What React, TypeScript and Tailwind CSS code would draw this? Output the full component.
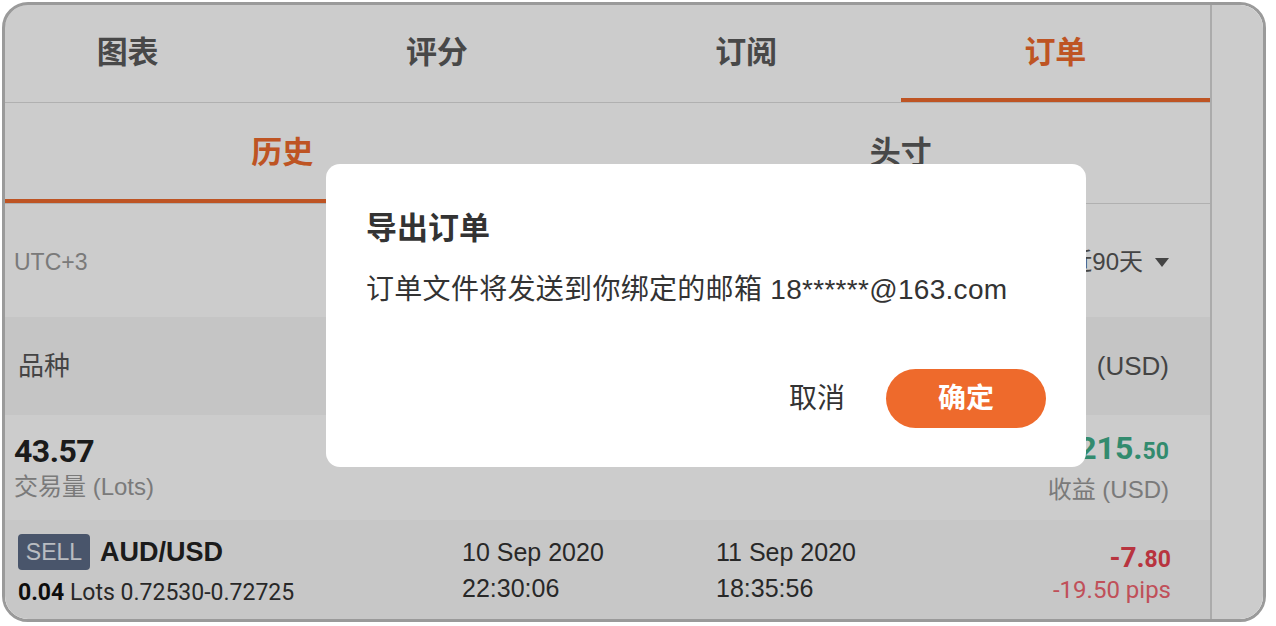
import React from "react";

const cjk = '"Liberation Sans", "Noto Sans CJK SC", sans-serif';
const num = 'Roboto, "Noto Sans CJK SC", sans-serif';

const tabs = ["图表", "评分", "订阅", "订单"];

export default function App() {
  return (
    <div className="w-[1276px] h-[626px] bg-white pl-[2px] pt-[2px]" style={{ fontFamily: cjk }}>
      <div className="relative w-[1264px] h-[620px] rounded-[26px] border-[3px] border-[#9a9a9a] overflow-hidden bg-white flex">
        {/* page */}
        <div className="w-[1205px] h-full overflow-hidden flex flex-col">
          {/* top tabs */}
          <div className="h-[98px] shrink-0 border-b border-[#dcdcdc]">
            <div className="ml-[-32px] w-[1237px] h-full grid grid-cols-4">
              {tabs.map((t, i) => (
                <div
                  key={t}
                  className={
                    "flex items-center justify-center pt-[4px] text-[31px] font-bold border-b-[4px] " +
                    (i === 3 ? "text-[#ee6a2c] border-[#ee6a2c]" : "text-[#5a5a5a] border-transparent")
                  }
                >
                  {t}
                </div>
              ))}
            </div>
          </div>

          {/* sub tabs */}
          <div className="h-[101px] shrink-0 border-b border-[#dcdcdc]">
            <div className="ml-[-32px] w-[1237px] h-full grid grid-cols-2">
              <div className="flex items-center justify-center pt-[5px] text-[31px] font-bold text-[#ee6a2c] border-b-[4px] border-[#ee6a2c]">
                历史
              </div>
              <div className="flex items-center justify-center pt-[5px] text-[31px] font-bold text-[#5a5a5a] border-b-[4px] border-transparent">
                头寸
              </div>
            </div>
          </div>

          {/* filter row */}
          <div className="h-[113px] shrink-0 flex items-center justify-between pl-[9px] pr-[41px] pt-[3px]">
            <span className="text-[23px] text-[#999]">UTC+3</span>
            <span className="flex items-center gap-[12px] text-[24px] text-[#555]">
              近90天
              <svg width="14" height="9" viewBox="0 0 14 9">
                <path d="M0 0h14L7 9z" fill="#555" />
              </svg>
            </span>
          </div>

          {/* header */}
          <div className="h-[98px] shrink-0 bg-[#f7f7f7] flex items-center pl-[13px] pr-[41px] text-[26px] text-[#555]">
            <span className="w-[444px]">品种</span>
            <span className="w-[254px]">开仓时间</span>
            <span className="flex-1">平仓时间</span>
            <span className="flex gap-[14px]">
              <span>盈亏</span>
              <span>(USD)</span>
            </span>
          </div>

          {/* summary */}
          <div className="h-[105px] shrink-0 flex items-center justify-between pl-[9px] pr-[41px]">
            <div className="flex flex-col">
              <span className="text-[32px] font-bold text-[#222] leading-[38px] tracking-[-0.5px]" style={{ fontFamily: num }}>
                43.57
              </span>
              <span className="text-[24px] text-[#999] leading-[34px]">交易量 (Lots)</span>
            </div>
            <div className="flex flex-col items-end">
              <span className="font-bold text-[#3fae8a] leading-[38px]" style={{ fontFamily: num }}>
                <span className="text-[32px]">+215.</span>
                <span className="text-[23px]">50</span>
              </span>
              <span className="text-[24px] text-[#999] leading-[34px]">收益 (USD)</span>
            </div>
          </div>

          {/* trade row */}
          <div className="h-[100px] shrink-0 bg-[#f9f9f9] flex items-center pl-[13px] pr-[39px]">
            <div className="w-[444px] flex flex-col gap-[6px]">
              <div className="flex items-center gap-[10px]">
                <span className="h-[36px] w-[72px] rounded-[4px] bg-[#5c6b86] text-[#e8ecf2] text-[23px] flex items-center justify-center">
                  SELL
                </span>
                <span className="text-[27px] font-bold text-[#222]">AUD/USD</span>
              </div>
              <div className="text-[23px] text-[#333] leading-[30px]" style={{ fontFamily: num }}>
                <span className="font-bold text-[#111]">0.04</span> Lots 0.72530-0.72725
              </div>
            </div>
            <div className="w-[254px] flex flex-col text-[25px] text-[#333] leading-[36px]">
              <span>10 Sep 2020</span>
              <span>22:30:06</span>
            </div>
            <div className="flex-1 flex flex-col text-[25px] text-[#333] leading-[36px]">
              <span>11 Sep 2020</span>
              <span>18:35:56</span>
            </div>
            <div className="flex flex-col items-end pt-[8px] leading-[28px]" style={{ fontFamily: num }}>
              <span className="font-bold text-[#e6414f]">
                <span className="text-[28px]">-7.</span>
                <span className="text-[23px]">80</span>
              </span>
              <span className="text-[24px] text-[#f06470]">-19.50 pips</span>
            </div>
          </div>
        </div>

        {/* right strip */}
        <div className="flex-1 h-full border-l-[2px] border-[#d6d6d6] bg-white" />

        {/* dim overlay */}
        <div className="absolute inset-0 bg-black/20" />

        {/* dialog */}
        <div className="absolute left-[321px] top-[159px] w-[760px] h-[303px] rounded-[14px] bg-white flex flex-col pl-[40px] pr-[40px]">
          <div className="mt-[46px] text-[31px] font-bold text-[#333] leading-[38px]">导出订单</div>
          <div className="mt-[24px] text-[28px] text-[#333] leading-[36px] tracking-[0.3px]">
            订单文件将发送到你绑定的邮箱 18******@163.com
          </div>
          <div className="mt-auto mb-[39px] flex items-center justify-end gap-[41px]">
            <span className="text-[28px] text-[#333]">取消</span>
            <span className="w-[160px] h-[59px] rounded-full bg-[#ee6a2c] text-white text-[28px] font-bold flex items-center justify-center">
              确定
            </span>
          </div>
        </div>
      </div>
    </div>
  );
}
